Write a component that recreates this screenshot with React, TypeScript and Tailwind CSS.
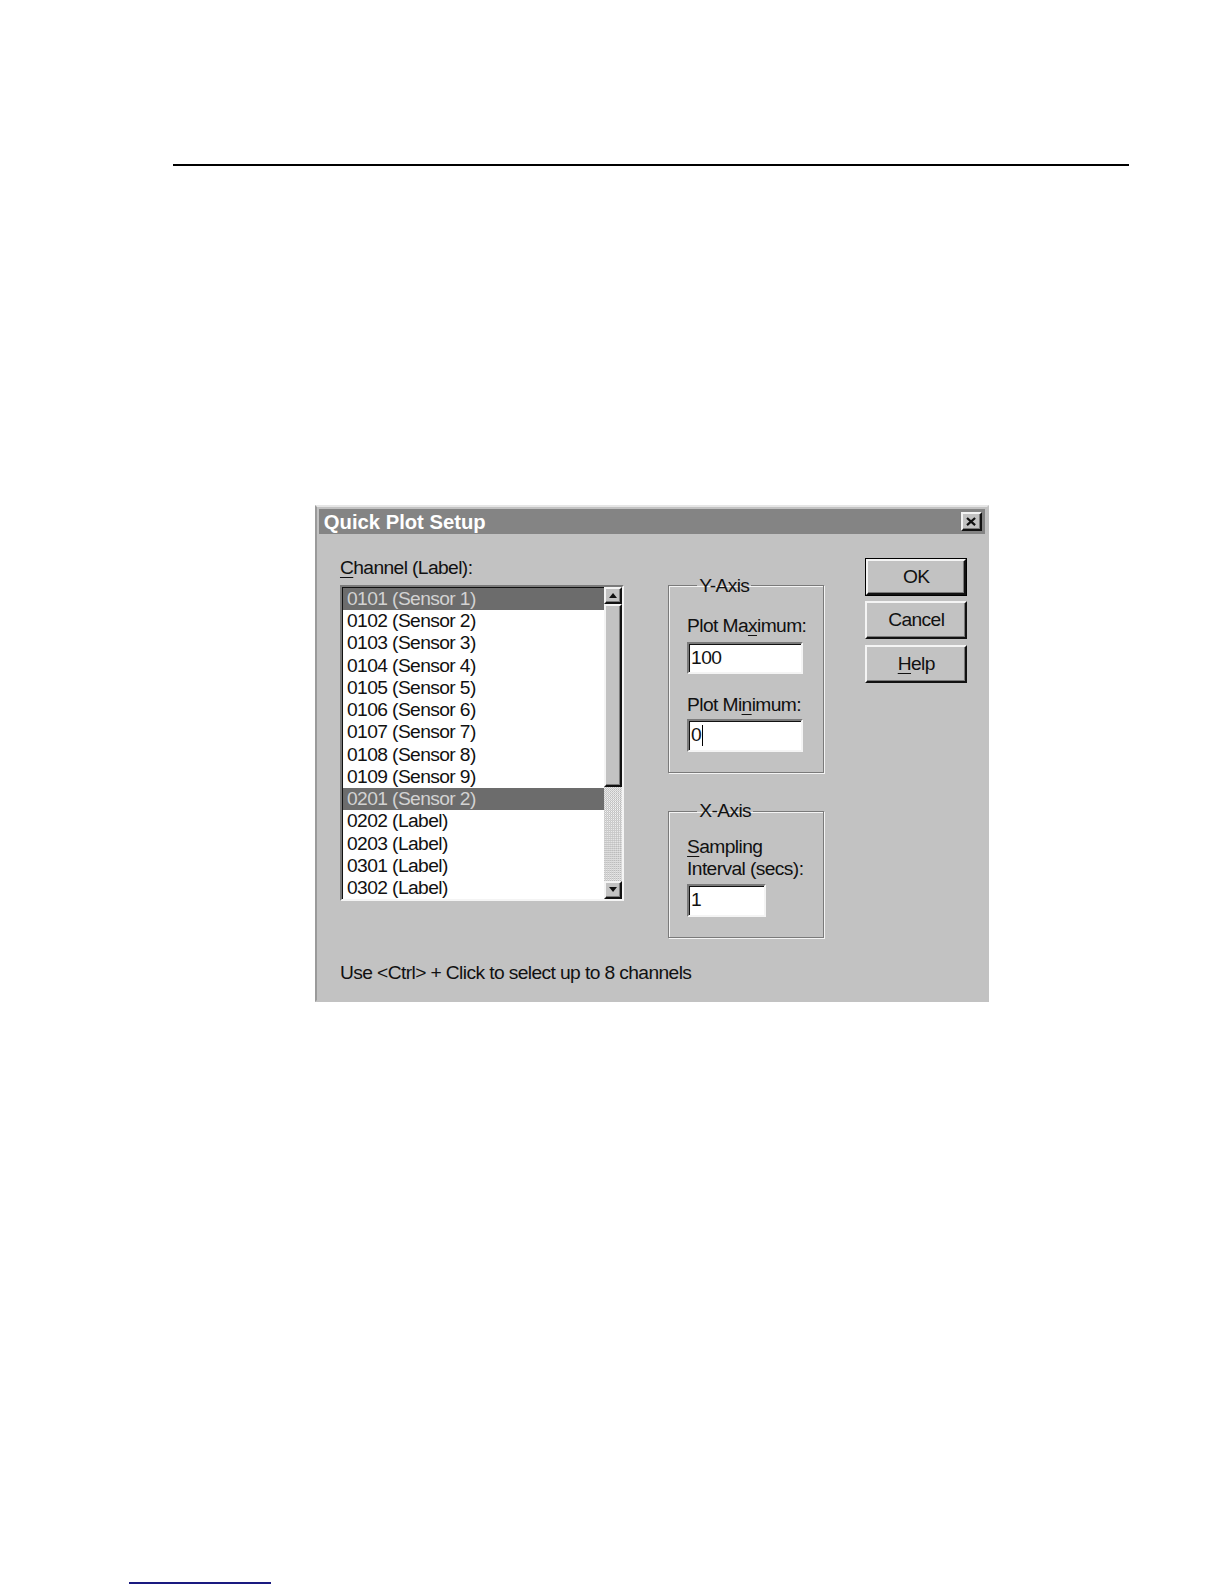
import React from 'react'

const font = "font-['Liberation_Sans',Arial,sans-serif] text-[19px] tracking-[-0.6px] leading-[22px]"

const channels = [
  { id: '0101', label: 'Sensor 1', selected: true },
  { id: '0102', label: 'Sensor 2' },
  { id: '0103', label: 'Sensor 3' },
  { id: '0104', label: 'Sensor 4' },
  { id: '0105', label: 'Sensor 5' },
  { id: '0106', label: 'Sensor 6' },
  { id: '0107', label: 'Sensor 7' },
  { id: '0108', label: 'Sensor 8' },
  { id: '0109', label: 'Sensor 9' },
  { id: '0201', label: 'Sensor 2', selected: true },
  { id: '0202', label: 'Label' },
  { id: '0203', label: 'Label' },
  { id: '0301', label: 'Label' },
  { id: '0302', label: 'Label' },
]

const raised =
  'border-2 border-t-[#f4f4f4] border-l-[#f4f4f4] border-b-[#111] border-r-[#111] shadow-[inset_-1px_-1px_0_#7a7a7a]'
const sunken =
  'border-2 border-t-[#7a7a7a] border-l-[#7a7a7a] border-b-[#f4f4f4] border-r-[#f4f4f4] shadow-[inset_1px_1px_0_#111]'

function Arrow({ down }: { down?: boolean }) {
  return (
    <svg width="8" height="5" viewBox="0 0 8 5">
      <polygon points={down ? '0,0 8,0 4,5' : '0,5 8,5 4,0'} fill="#111" />
    </svg>
  )
}

function TextBox({ value, width, caret }: { value: string; width: string; caret?: boolean }) {
  return (
    <div className={`${sunken} ${width} h-[32px] bg-white flex items-center pl-[2px]`}>
      <span className="text-[#111]">{value}</span>
      {caret && <span className="w-[1px] h-[20px] bg-black ml-[1px]" />}
    </div>
  )
}

function Group({ title, children, className }: { title: string; children: React.ReactNode; className?: string }) {
  return (
    <fieldset
      className={`border border-[#7a7a7a] shadow-[1px_1px_0_#f4f4f4,inset_1px_1px_0_#f4f4f4] pl-[18px] pr-[10px] m-0 ${className ?? ''}`}
    >
      <legend className="ml-[10px] px-[2px] leading-[20px]">{title}</legend>
      {children}
    </fieldset>
  )
}

function Button({ children, isDefault }: { children: React.ReactNode; isDefault?: boolean }) {
  return (
    <div className={`${isDefault ? 'border border-black' : ''} h-[38px] w-[101px] flex`}>
      <div className={`${raised} flex-1 flex items-center justify-center text-[#111]`}>{children}</div>
    </div>
  )
}

export default function App() {
  return (
    <div className="w-full h-screen bg-white overflow-hidden flex flex-col">
      <div className={`[zoom:1.012] flex-1 flex flex-col ${font}`}>
        <div className="mt-[162px] ml-[171px] w-[945px] h-[2px] shrink-0 bg-black" />

        {/* dialog */}
        <div className="mt-[335px] ml-[311px] w-[666px] h-[491px] shrink-0 bg-[#c2c2c2] border-2 border-t-[#e6e6e6] border-l-[#9a9a9a] border-b-[#c2c2c2] border-r-[#c2c2c2] flex flex-col text-[#111]">
          <div className="mt-[2px] mx-[2px] h-[25px] bg-[#848484] flex items-center justify-between pl-[5px] pr-[3px]">
            <span className="text-white font-bold text-[20px] tracking-[0px]">Quick Plot Setup</span>
            <div className={`${raised} w-[20px] h-[19px] bg-[#c2c2c2] flex items-center justify-center`}>
              <svg width="10" height="9" viewBox="0 0 10 9">
                <path d="M1 1 L9 8 M9 1 L1 8" stroke="#111" strokeWidth="2.2" />
              </svg>
            </div>
          </div>

          <div className="flex pl-[23px] pt-[22px]">
            {/* channel list */}
            <div className="flex flex-col w-[281px]">
              <div className="h-[22px]">
                <span className="underline underline-offset-[3px]">C</span>hannel (Label):
              </div>
              <div className={`${sunken} mt-[6px] h-[312px] bg-white flex`}>
                <div className="flex-1 flex flex-col pt-[1px] pl-[1px]">
                  {channels.map((c) => (
                    <div
                      key={c.id + c.label}
                      className={`h-[22px] pl-[4px] ${c.selected ? 'bg-[#6c6c6c] text-[#d2d2d2]' : ''}`}
                    >
                      {c.id} ({c.label})
                    </div>
                  ))}
                </div>
                <div className="w-[18px] flex flex-col">
                  <div className={`${raised} h-[17px] bg-[#c2c2c2] flex items-center justify-center`}>
                    <Arrow />
                  </div>
                  <div className={`${raised} h-[181px] bg-[#c2c2c2]`} />
                  <div className="flex-1 bg-[repeating-conic-gradient(#f4f4f4_0_25%,#b4b4b4_0_50%)] bg-[length:2px_2px]" />
                  <div className={`${raised} h-[17px] bg-[#c2c2c2] flex items-center justify-center`}>
                    <Arrow down />
                  </div>
                </div>
              </div>
            </div>

            {/* axes */}
            <div className="ml-[43px] mt-[19px] w-[154px] flex flex-col">
              <Group title="Y-Axis" className="h-[195px]">
                <div className="mt-[19px] h-[22px]">
                  Plot Ma<span className="underline underline-offset-[3px]">x</span>imum:
                </div>
                <div className="mt-[4px]">
                  <TextBox value="100" width="w-[115px]" />
                </div>
                <div className="mt-[20px] h-[22px]">
                  Plot Mi<span className="underline underline-offset-[3px]">n</span>imum:
                </div>
                <div className="mt-[3px]">
                  <TextBox value="0" width="w-[115px]" caret />
                </div>
              </Group>
              <Group title="X-Axis" className="mt-[28px] h-[135px]">
                <div className="mt-[14px] leading-[22px]">
                  <span className="underline underline-offset-[3px]">S</span>ampling
                  <br />
                  Interval (secs):
                </div>
                <div className="mt-[4px]">
                  <TextBox value="1" width="w-[78px]" />
                </div>
              </Group>
            </div>

            {/* buttons */}
            <div className="ml-[41px] mt-[1px] flex flex-col gap-[5px]">
              <Button isDefault>OK</Button>
              <Button>Cancel</Button>
              <Button>
                <span className="underline underline-offset-[3px]">H</span>elp
              </Button>
            </div>
          </div>

          <div className="pl-[23px] mt-[24px] h-[22px]">Use &lt;Ctrl&gt; + Click to select up to 8 channels</div>
        </div>

        <div className="mt-auto ml-[127px] w-[141px] h-[2px] shrink-0 bg-[#1a1a80]" />
      </div>
    </div>
  )
}
